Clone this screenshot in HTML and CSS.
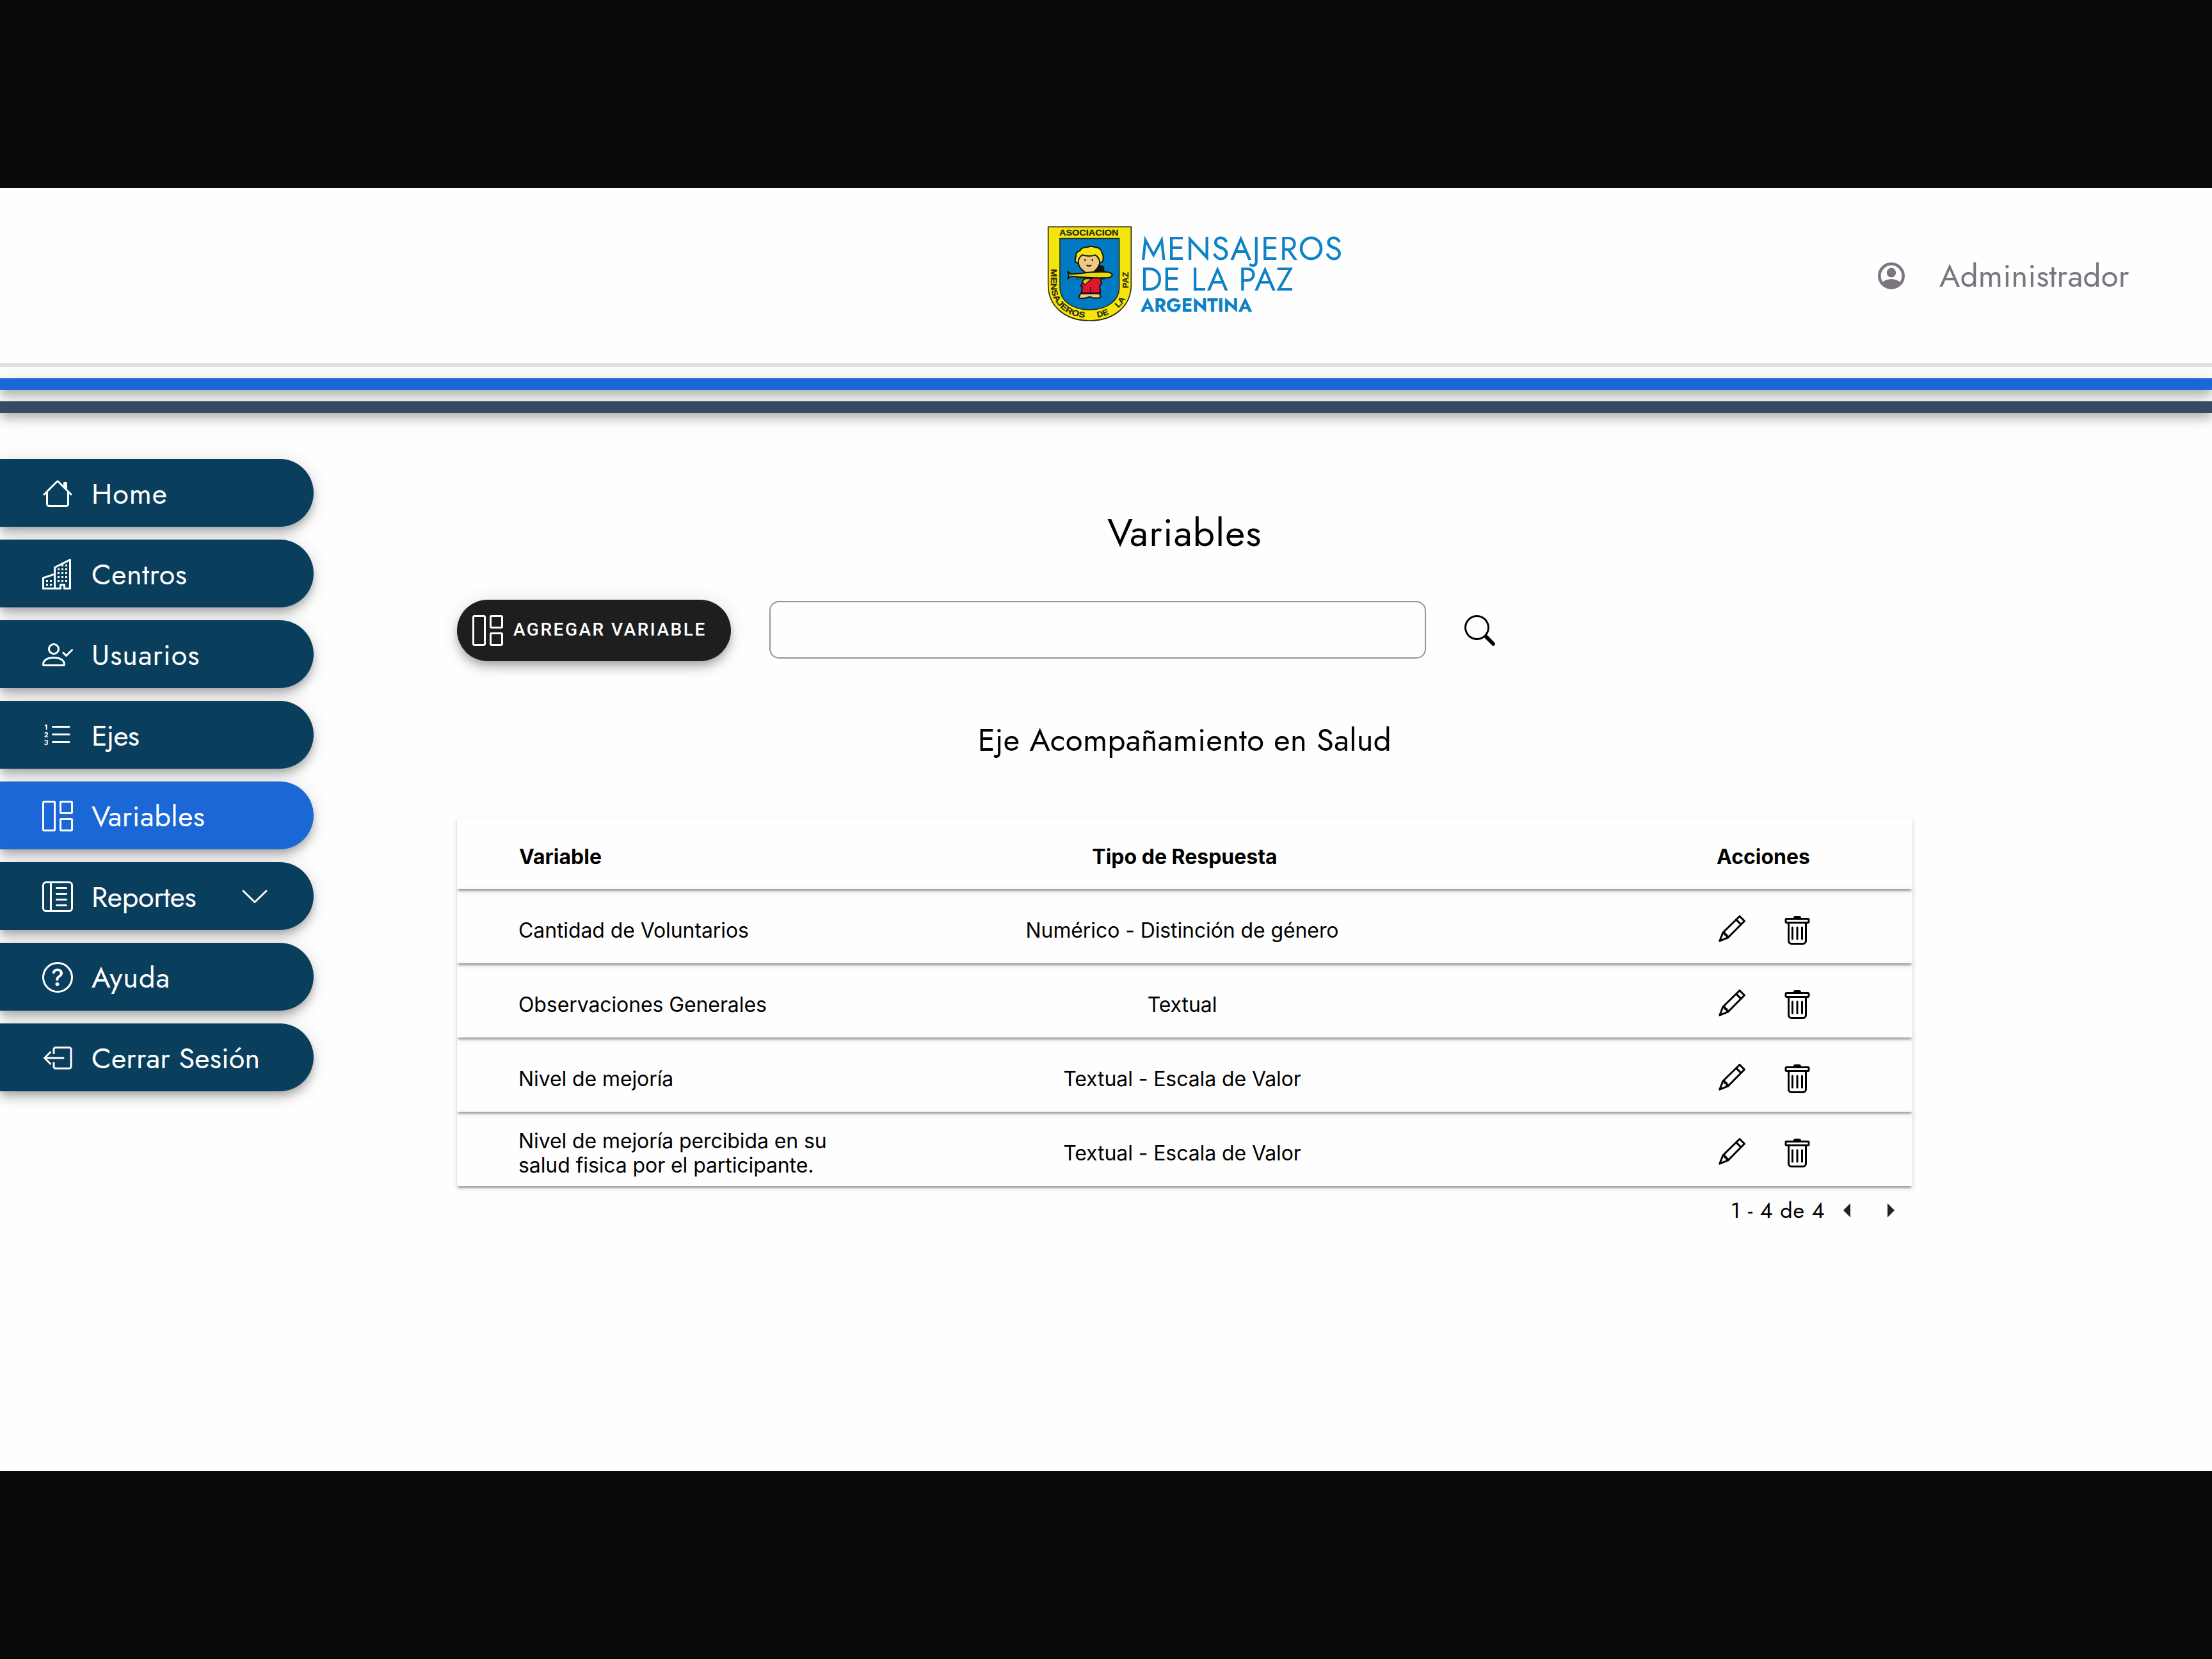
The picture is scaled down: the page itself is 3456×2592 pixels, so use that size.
FILE: index.html
```
<!DOCTYPE html>
<html lang="es">
<head>
<meta charset="utf-8">
<title>Variables</title>
<link rel="stylesheet" href="styles.css">
</head>
<body>
<svg class="sprite" aria-hidden="true">
  <symbol id="i-board" viewBox="0 0 16 16"><path fill="none" stroke="currentColor" d="M1 .5h5a.5.5 0 0 1 .5.5v14a.5.5 0 0 1-.5.5H1a.5.5 0 0 1-.5-.5V1A.5.5 0 0 1 1 .5zM10 .5h5a.5.5 0 0 1 .5.5v5a.5.5 0 0 1-.5.5h-5a.5.5 0 0 1-.5-.5V1a.5.5 0 0 1 .5-.5zM10 9.500h5a.5.5 0 0 1 .5.5v5a.5.5 0 0 1-.5.5h-5a.5.5 0 0 1-.5-.5v-5a.5.5 0 0 1 .5-.5z"/></symbol>
  <symbol id="i-pencil" viewBox="0 1 16 16"><g fill="none" stroke="currentColor" stroke-linejoin="round" stroke-linecap="round"><path d="M12 1.500 14.500 4 6 12.600 1.600 14.400 3.300 10z"/><path d="M10.200 3.300 12.700 5.800"/><path d="M3.600 10.200h.7v.9h.9v.9h.8v.6"/></g></symbol>
  <symbol id="i-trash" viewBox="0 -.330 16 16"><path fill="currentColor" d="M5.500 5.500A.5.5 0 0 1 6 6v6a.5.5 0 0 1-1 0V6a.5.5 0 0 1 .5-.5zm2.500 0a.5.5 0 0 1 .5.5v6a.5.5 0 0 1-1 0V6a.5.5 0 0 1 .5-.5zm3 .5a.5.5 0 0 0-1 0v6a.5.5 0 0 0 1 0V6z"/><path fill="currentColor" fill-rule="evenodd" d="M14.500 3a1 1 0 0 1-1 1H13v9a2 2 0 0 1-2 2H5a2 2 0 0 1-2-2V4h-.5a1 1 0 0 1-1-1V2a1 1 0 0 1 1-1H6a1 1 0 0 1 1-1h2a1 1 0 0 1 1 1h3.500a1 1 0 0 1 1 1v1zM4.118 4 4 4.059V13a1 1 0 0 0 1 1h6a1 1 0 0 0 1-1V4.059L11.882 4H4.118zM2.500 3V2h11v1h-11z"/></symbol>
</svg>
<div class="page">
  <header class="header">
    <div class="logo">
      <svg class="shield" viewBox="36 24 399 450">
        <path d="M41 28H430V300C430 400 350 468 235 468S41 400 41 300Z" fill="#f4e60c" stroke="#2a2a12" stroke-width="5"/>
        <path d="M96 83H374V315C374 372 318 417 235 417S96 372 96 315Z" fill="#007ac3" stroke="#23301c" stroke-width="5"/>
        <g class="shield-text">
          <text x="93" y="69" textLength="277" lengthAdjust="spacingAndGlyphs">ASOCIACION</text>
          <path id="rim" d="M54 226V300C54 392 130 455 235 455S417 392 417 300V228" fill="none" stroke="none"/>
          <text><textPath href="#rim" textLength="318" lengthAdjust="spacingAndGlyphs">MENSAJEROS</textPath></text>
          <text><textPath href="#rim" startOffset="378" textLength="56" lengthAdjust="spacingAndGlyphs">DE</textPath></text>
          <text><textPath href="#rim" startOffset="485" textLength="56" lengthAdjust="spacingAndGlyphs">LA</textPath></text>
          <text><textPath href="#rim" startOffset="592" textLength="76" lengthAdjust="spacingAndGlyphs">PAZ</textPath></text>
        </g>
        <g stroke="#17140c" stroke-width="6" stroke-linejoin="round">
          <path d="M268 205 300 215 303 250H262Z" fill="#17140c"/>
          <path d="M181 160V190Q184 222 208 236L222 248H246L262 232Q282 215 284 188V155Z" fill="#ecca83"/>
          <path d="M171 196Q164 178 172 166 168 148 190 140 200 122 224 124 240 114 262 124 288 126 292 148 304 168 296 192L284 196Q280 172 262 160 236 170 200 160 180 176 182 198Z" fill="#f4e60c"/>
          <path d="M210 270 283 266 292 292 282 306 286 338H196L202 310 194 306Z" fill="#e3142d"/>
          <path d="M201 283 214 272H244L212 300Z" fill="#d7cf10" stroke-width="4"/>
          <path d="M240 310V338" fill="none" stroke-width="4"/>
          <path d="M196 341Q184 350 185 361 206 368 236 356 262 368 287 358 288 346 276 341Z" fill="#ecca83"/>
          <path d="M132 238 148 250 200 246Q250 238 318 240 340 244 341 254 338 266 312 268 240 268 200 264L148 260 132 272 138 255Z" fill="#e8dc10"/>
          <path d="M174 264Q172 274 184 273L200 266ZM288 268Q298 278 310 268Z" fill="#ecca83" stroke-width="4"/>
        </g>
        <path d="M214 180V188M248 180V188M221 207Q232 217 243 207" fill="none" stroke="#17140c" stroke-width="6"/>
      </svg>
      <div class="brand">
        <span class="brand-1">MENSAJEROS</span>
        <span class="brand-2">DE LA PAZ</span>
        <span class="brand-3">ARGENTINA</span>
      </div>
    </div>
    <div class="user">
      <svg class="user-icon" viewBox="0 0 42 42"><circle cx="21" cy="21" r="18.700" fill="none" stroke="currentColor" stroke-width="4.600"/><ellipse cx="21" cy="16" rx="7.200" ry="7.500" fill="currentColor"/><path d="M6 32Q12 26 21 26T36 32Q31 40 21 40T6 32Z" fill="currentColor"/></svg>
      <span class="user-name">Administrador</span>
    </div>
  </header>
  <div class="rule rule-gray"></div>
  <div class="rule rule-blue"></div>
  <div class="rule rule-navy"></div>
  <div class="main">
    <nav class="nav">
      <a class="item wide"><svg class="icon" viewBox="0 0 16 16"><path fill="currentColor" d="M8.707 1.500a1 1 0 0 0-1.414 0L.646 8.146a.5.5 0 0 0 .708.708L2 8.207V13.500A1.500 1.500 0 0 0 3.500 15h9a1.500 1.500 0 0 0 1.500-1.500V8.207l.646.647a.5.5 0 0 0 .708-.708L13 5.793V2.500a.5.5 0 0 0-.5-.5h-1a.5.5 0 0 0-.5.5v1.293L8.707 1.500ZM13 7.207V13.500a.5.5 0 0 1-.5.5h-9a.5.5 0 0 1-.5-.5V7.207l5-5 5 5Z"/></svg><span>Home</span></a>
      <a class="item"><svg class="icon" viewBox="0 0 16 16"><path fill="currentColor" fill-rule="evenodd" d="M14.763.075A.5.5 0 0 1 15 .5v15a.5.5 0 0 1-.5.5h-3a.5.5 0 0 1-.5-.5V14h-1v1.500a.5.5 0 0 1-.5.5h-9a.5.5 0 0 1-.5-.5V10a.5.5 0 0 1 .342-.474L6 7.640V4.500a.5.5 0 0 1 .276-.447l8-4a.5.5 0 0 1 .487.022zM6 8.694 1 10.360V15h5V8.694zM7 15h2v-1.500a.5.5 0 0 1 .5-.5h2a.5.5 0 0 1 .5.5V15h2V1.309l-7 3.500V15z"/><path fill="currentColor" d="M2 11h1v1H2v-1zm2 0h1v1H4v-1zm-2 2h1v1H2v-1zm2 0h1v1H4v-1zm4-4h1v1H8V9zm2 0h1v1h-1V9zm-2 2h1v1H8v-1zm2 0h1v1h-1v-1zm2-2h1v1h-1V9zm0 2h1v1h-1v-1zM8 7h1v1H8V7zm2 0h1v1h-1V7zm2 0h1v1h-1V7zM8 5h1v1H8V5zm2 0h1v1h-1V5zm2 0h1v1h-1V5zm0-2h1v1h-1V3zm-2 0h1v1h-1z"/></svg><span>Centros</span></a>
      <a class="item wide"><svg class="icon" viewBox="0 0 16 16"><g fill="none" stroke="currentColor" stroke-linecap="round" stroke-linejoin="round"><circle cx="6" cy="5" r="2.500"/><path d="M1 13.500a.5.5 0 0 1-.5-.5C.5 11 2.500 9.500 6 9.500s5.500 1.500 5.500 3.500a.5.5 0 0 1-.5.5zM11 7l1.500 1.500L15.500 5.500"/></g></svg><span>Usuarios</span></a>
      <a class="item tightest"><svg class="icon" viewBox="0 0 16 16"><path fill="none" stroke="currentColor" stroke-linecap="round" d="M5.500 3.500h8.500M5.500 7.500h8.500M5.500 11.500h8.500"/><path fill="currentColor" d="M1.713 11.865v-.474H2c.217 0 .363-.137.363-.317 0-.185-.158-.31-.361-.31-.223 0-.367.152-.373.31h-.59c.016-.467.373-.787.986-.787.588-.002.954.291.957.703a.595.595 0 0 1-.492.594v.033a.615.615 0 0 1 .569.631c.003.533-.502.800-1.051.800-.656 0-1-.37-1.008-.794h.582c.008.178.186.306.422.309.254 0 .424-.145.422-.35-.002-.195-.155-.348-.414-.348h-.3zm-.004-4.699h-.604v-.035c0-.408.295-.844.958-.844.583 0 .960.326.960.756 0 .389-.257.617-.476.848l-.537.572v.03h1.054V9H1.143v-.395l.957-.990c.138-.142.293-.304.293-.508 0-.180-.147-.320-.342-.320a.330.330 0 0 0-.342.338v.041zM2.564 5h-.635V2.924h-.031l-.598.420v-.567l.629-.443h.635V5z"/></svg><span>Ejes</span></a>
      <a class="item active"><svg class="icon"><use href="#i-board"/></svg><span>Variables</span></a>
      <a class="item tighter"><svg class="icon" viewBox="0 0 16 16"><g fill="none" stroke="currentColor" stroke-linecap="round"><rect x=".5" y=".5" width="15" height="15" rx="1.500"/><path d="M4.500 .5v15M7.500 3.500h5M7.500 6.500h5M7.500 9.500h5M7.500 12.500h5"/></g></svg><span>Reportes</span><svg class="chevron" viewBox="0 0 40 22"><path d="M2 2 20 19.500 38 2" fill="none" stroke="currentColor" stroke-width="3" stroke-linecap="round" stroke-linejoin="round"/></svg></a>
      <a class="item wide"><svg class="icon" viewBox="0 0 16 16"><path fill="currentColor" d="M8 15A7 7 0 1 1 8 1a7 7 0 0 1 0 14zm0 1A8 8 0 1 0 8 0a8 8 0 0 0 0 16z"/><path fill="currentColor" d="M5.255 5.786a.237.237 0 0 0 .241.247h.825c.138 0 .248-.113.266-.250.090-.656.540-1.134 1.342-1.134.686 0 1.314.343 1.314 1.168 0 .635-.374.927-.965 1.371-.673.489-1.206 1.060-1.168 1.987l.003.217a.250.250 0 0 0 .250.246h.811a.250.250 0 0 0 .250-.250v-.105c0-.718.273-.927 1.010-1.486.609-.463 1.244-.977 1.244-2.056 0-1.511-1.276-2.241-2.673-2.241-1.267 0-2.655.590-2.750 2.286zm1.557 5.763c0 .533.425.927 1.010.927.609 0 1.028-.394 1.028-.927 0-.552-.420-.940-1.029-.940-.584 0-1.009.388-1.009.940z"/></svg><span>Ayuda</span></a>
      <a class="item tight"><svg class="icon" viewBox="0 0 16 16"><g fill="none" stroke="currentColor" stroke-linecap="round" stroke-linejoin="round"><path d="M6 5.500V3.500a.9.900 0 0 1 .9-.9h7.200a.9.900 0 0 1 .9.900v9a.9.900 0 0 1-.9.900H6.900a.9.900 0 0 1-.9-.9v-2M11 8H1.200M4.200 5 1.200 8l3 3"/></g></svg><span>Cerrar Sesión</span></a>
    </nav>
    <main class="content">
      <h1 class="title">Variables</h1>
      <div class="toolbar">
        <button class="add"><svg class="icon"><use href="#i-board"/></svg><span>AGREGAR VARIABLE</span></button>
        <input class="search" type="text">
        <svg class="icon lens" viewBox="0 0 16 16"><path fill="currentColor" d="M11.742 10.344a6.500 6.500 0 1 0-1.397 1.398h-.001c.030.040.062.078.098.115l3.850 3.850a1 1 0 0 0 1.415-1.414l-3.850-3.850a1.007 1.007 0 0 0-.115-.100zM12 6.500a5.500 5.500 0 1 1-11 0 5.500 5.500 0 0 1 11 0z"/></svg>
      </div>
      <h2 class="subtitle">Eje Acompañamiento en Salud</h2>
      <div class="table">
        <div class="row head"><div>Variable</div><div class="type">Tipo de Respuesta</div><div class="actions">Acciones</div></div>
        <div class="row"><div class="name">Cantidad de Voluntarios</div><div class="type">Numérico - Distinción de género</div><div class="actions"><svg class="icon"><use href="#i-pencil"/></svg><svg class="icon"><use href="#i-trash"/></svg></div></div>
        <div class="row"><div class="name">Observaciones Generales</div><div class="type">Textual</div><div class="actions"><svg class="icon"><use href="#i-pencil"/></svg><svg class="icon"><use href="#i-trash"/></svg></div></div>
        <div class="row"><div class="name">Nivel de mejoría</div><div class="type">Textual - Escala de Valor</div><div class="actions"><svg class="icon"><use href="#i-pencil"/></svg><svg class="icon"><use href="#i-trash"/></svg></div></div>
        <div class="row"><div class="name">Nivel de mejoría percibida en su salud fisica por el participante.</div><div class="type">Textual - Escala de Valor</div><div class="actions"><svg class="icon"><use href="#i-pencil"/></svg><svg class="icon"><use href="#i-trash"/></svg></div></div>
      </div>
      <div class="pager"><span>1 - 4 de 4</span><svg class="prev" viewBox="0 0 11 22"><path d="M11 0v22L0 11z"/></svg><svg class="next" viewBox="0 0 11 22"><path d="M0 0v22l11-11z"/></svg></div>
    </main>
  </div>
</div>
</body>
</html>
```
FILE: styles.css
```
* { box-sizing: border-box; }

body {
  margin: 0;
  padding-top: 294px;
  min-height: 2592px;
  background: #090909;
  color: #000;
  font-family: Jost, Futura, Lato, sans-serif;
}

.sprite { display: none; }

.page {
  height: 2004px;
  background: #fefefe;
  overflow: hidden;
}

.icon {
  flex: none;
  width: 48px;
  height: 48px;
}

/* Header */
.header {
  display: flex;
  align-items: center;
  justify-content: space-between;
  height: 273px;
  padding: 0 130px 0 1636px;
}
.logo { display: flex; gap: 13px; height: 155px; }
.shield { width: 133px; height: 150px; }
.shield-text {
  font: bold 38px "Liberation Sans", sans-serif;
  fill: #2a2a12;
  stroke: #2a2a12;
  stroke-width: .8px;
}
.brand {
  display: flex;
  flex-direction: column;
  color: #0f81c5;
  white-space: nowrap;
}
.brand-1, .brand-2 { font-size: 50px; line-height: 48px; }
.brand-1 { margin-top: 12px; letter-spacing: 1.500px; }
.brand-2 { letter-spacing: .8px; }
.brand-3 { font-size: 29px; font-weight: 700; line-height: 32px; }

.user {
  display: flex;
  align-items: center;
  gap: 54px;
  width: 392px;
  color: #7b7580;
}
.user-icon { flex: none; width: 42px; height: 42px; }
.user-name {
  font-size: 49px;
  line-height: 60px;
  letter-spacing: .3px;
  white-space: nowrap;
}

.rule { height: 18px; }
.rule-gray { height: 6px; background: #e0e0e0; }
.rule-blue, .rule-navy {
  margin-top: 18px;
  box-shadow: 0 6px 12px -3px rgba(0,0,0,.2), 0 12px 15px 0 rgba(0,0,0,.14), 0 3px 30px 0 rgba(0,0,0,.12);
}
.rule-blue { background: #1a67d5; }
.rule-navy { position: relative; background: #364b63; }

.main { display: flex; padding-top: 72px; }

/* Sidebar */
.nav {
  display: flex;
  flex-direction: column;
  gap: 20px;
  width: 490px;
}
.item {
  display: flex;
  align-items: center;
  height: 106px;
  padding: 2px 0 0 66px;
  border-radius: 0 53px 53px 0;
  background: #0a3e5d;
  color: #fff;
  font-size: 45px;
  letter-spacing: .5px;
  white-space: nowrap;
  box-shadow: 0 6px 12px -3px rgba(0,0,0,.2), 0 12px 15px 0 rgba(0,0,0,.14), 0 3px 30px 0 rgba(0,0,0,.12);
}
.item.wide { letter-spacing: 1px; }
.item.tight { letter-spacing: .15px; }
.item.tighter { letter-spacing: -.35px; }
.item.tightest { letter-spacing: -.8px; }
.item .icon { margin-right: 29px; }
.item.active { background: #1a67d5; }
.chevron { width: 40px; height: 22px; margin: 0 72px 0 auto; }

/* Content */
.content { width: 2274px; margin-left: 224px; }
.title {
  margin: 76px 0 64px;
  font-size: 60px;
  font-weight: 400;
  line-height: 80px;
  letter-spacing: 1.200px;
  text-align: center;
}
.toolbar { display: flex; align-items: center; height: 96px; }
.add {
  display: flex;
  align-items: center;
  width: 428px;
  height: 96px;
  padding: 0 0 0 24px;
  border: 0;
  border-radius: 48px;
  background: #1e1e1e;
  color: #fff;
  font: 500 28px Roboto, sans-serif;
  letter-spacing: 2.500px;
  white-space: nowrap;
  box-shadow: 0 6px 12px -3px rgba(0,0,0,.2), 0 12px 15px 0 rgba(0,0,0,.14), 0 3px 30px 0 rgba(0,0,0,.12);
}
.add span { margin: -4px 0 0 16px; }
.search {
  width: 1026px;
  height: 90px;
  margin: -2px 0 0 60px;
  border: 2px solid #949494;
  border-radius: 15px;
  background: transparent;
}
.lens { margin-left: 60px; }
.subtitle {
  margin: 93px 0;
  font-size: 49px;
  font-weight: 400;
  line-height: 60px;
  letter-spacing: .35px;
  text-align: center;
}

/* Table */
.table {
  font-family: Inter, sans-serif;
  font-size: 32px;
  line-height: 38.500px;
  letter-spacing: -.1px;
}
.row {
  display: grid;
  grid-template-columns: 700px 672px 1fr;
  align-items: center;
  height: 116px;
  padding: 14px 0 0 97px;
  box-shadow: 0 6px 3px -3px rgba(0,0,0,.2), 0 3px 3px 0 rgba(0,0,0,.14), 0 3px 9px 0 rgba(0,0,0,.12);
}
.head {
  height: 110px;
  padding-top: 11px;
  font-weight: 700;
  letter-spacing: 0;
}
.head .type { padding-left: 8px; }
.name { max-width: 500px; margin-left: -1px; }
.type { text-align: center; }
.actions { display: flex; gap: 54px; padding-left: 499px; }

.pager {
  display: flex;
  align-items: center;
  height: 76px;
  padding-left: 1990px;
  font-size: 34px;
  letter-spacing: .75px;
  white-space: nowrap;
}
.pager svg { width: 11px; height: 22px; fill: #222; }
.prev { margin-left: 29px; }
.next { margin-left: 58px; }
```
